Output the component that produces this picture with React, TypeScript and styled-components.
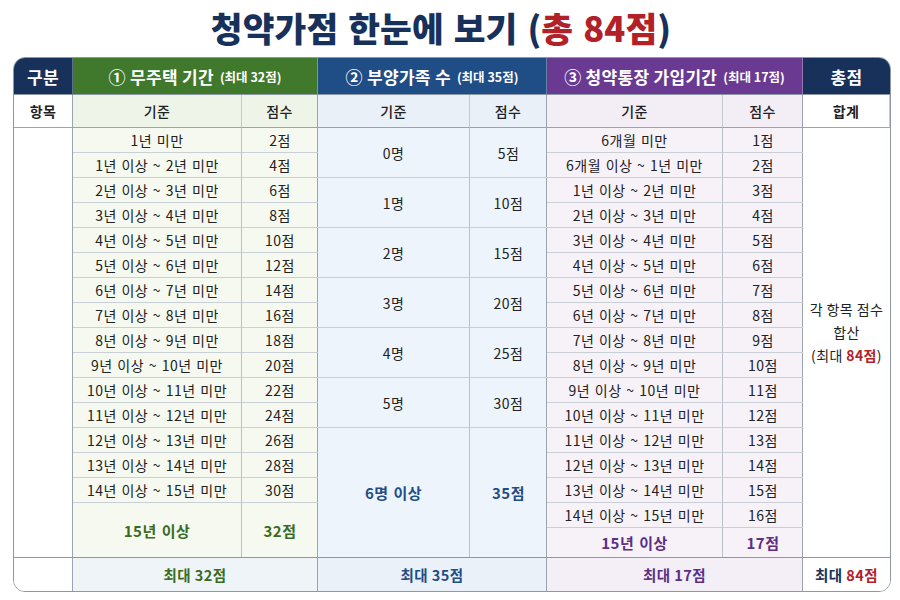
import React from 'react';
import styled, { createGlobalStyle } from 'styled-components';

const GlobalStyle = createGlobalStyle`
  html, body {
    margin: 0;
    padding: 0;
    background: #ffffff;
  }
  body {
    font-family: 'Noto Sans CJK KR', 'Noto Sans', sans-serif;
    color: #222;
  }
`;

const COLS = [59, 169, 76, 152, 77, 176, 80, 87];
const ROW = 25;

type Tone = {
  head: string;
  sub: string;
  body: string;
  foot: string;
  ink: string;
};

const GREEN: Tone = { head: '#41792c', sub: '#eef4e7', body: '#f5f9ef', foot: '#eff4f9', ink: '#3a6b22' };
const BLUE: Tone = { head: '#1f4d85', sub: '#e9f0f8', body: '#eef4fb', foot: '#ebf1f9', ink: '#1f4d85' };
const PURPLE: Tone = { head: '#6a3a92', sub: '#f3edf6', body: '#f7f1f8', foot: '#f4eef7', ink: '#5b2f86' };
const NAVY = '#17315a';
const RED = '#b32128';

const Page = styled.div`
  width: 900px;
  height: 600px;
  padding: 0 9px 0 13px;
  box-sizing: border-box;
  overflow: hidden;
`;

const Title = styled.h1`
  margin: 0;
  height: 57px;
  display: flex;
  align-items: center;
  justify-content: center;
  padding: 0 22px 3px 0;
  box-sizing: border-box;
  font-size: 34.5px;
  font-weight: 800;
  color: ${NAVY};
  letter-spacing: 0.1px;
  word-spacing: 2px;
`;

const Accent = styled.span`
  color: ${RED};
`;

const Table = styled.div`
  display: grid;
  grid-template-columns: ${COLS.map((c) => `${c}px`).join(' ')};
  grid-template-rows: 37px 33px 430px 1fr;
  width: 878px;
  height: 535px;
  box-sizing: border-box;
  border: 1px solid #8e98a5;
  border-radius: 12px;
  overflow: hidden;
  background: #fff;
`;

const HeadCell = styled.div<{ $bg: string; $span?: number; $last?: boolean }>`
  grid-column: span ${(p) => p.$span ?? 1};
  background: ${(p) => p.$bg};
  color: #fff;
  display: flex;
  align-items: center;
  justify-content: center;
  gap: 6px;
  font-size: 17px;
  font-weight: 700;
  letter-spacing: 0.3px;
  border-right: ${(p) => (p.$last ? 'none' : '1px solid rgba(255,255,255,0.3)')};
  border-bottom: 1px solid #8e98a5;
`;

const HeadNote = styled.span`
  font-size: 12.5px;
  font-weight: 700;
  letter-spacing: 0;
`;

const SubCell = styled.div<{ $bg: string; $bold?: boolean; $strong?: boolean }>`
  background: ${(p) => p.$bg};
  display: flex;
  align-items: center;
  justify-content: center;
  font-size: 14px;
  font-weight: ${(p) => (p.$bold ? 700 : 500)};
  letter-spacing: 0.4px;
  color: #222;
  border-right: 1px solid ${(p) => (p.$strong ? '#9aa4b0' : '#c3cad2')};
  border-bottom: 1px solid #9aa4b0;
  &:last-child {
    border-right: none;
  }
`;

const BlankColumn = styled.div`
  background: #fff;
  border-right: 1px solid #9aa4b0;
  border-bottom: 1px solid #8e98a5;
`;

const GroupBody = styled.div<{ $bg: string; $cols: string; $rows: string }>`
  grid-column: span 2;
  display: grid;
  grid-template-columns: ${(p) => p.$cols};
  grid-template-rows: ${(p) => p.$rows};
  background: ${(p) => p.$bg};
  border-right: 1px solid #9aa4b0;
  border-bottom: 1px solid #8e98a5;
`;

const Cell = styled.div<{ $ink?: string; $big?: boolean; $first?: boolean }>`
  display: flex;
  align-items: center;
  justify-content: center;
  font-size: ${(p) => (p.$big ? '15px' : '14px')};
  font-weight: ${(p) => (p.$big ? 700 : 400)};
  letter-spacing: 0.5px;
  word-spacing: 1px;
  color: ${(p) => p.$ink ?? '#222'};
  border-right: ${(p) => (p.$first ? '1px solid #b8c0c9' : 'none')};
  border-bottom: 1px solid #c9cfd6;
  white-space: nowrap;
  &:nth-last-child(-n + 2) {
    border-bottom: none;
  }
`;

const TotalBody = styled.div`
  display: flex;
  flex-direction: column;
  align-items: center;
  justify-content: center;
  padding-bottom: 20px;
  box-sizing: border-box;
  font-size: 14px;
  line-height: 23px;
  letter-spacing: 0.4px;
  color: #222;
  border-bottom: 1px solid #8e98a5;
`;

const FootCell = styled.div<{ $bg: string; $ink: string; $span?: number; $last?: boolean }>`
  grid-column: span ${(p) => p.$span ?? 1};
  background: ${(p) => p.$bg};
  color: ${(p) => p.$ink};
  display: flex;
  align-items: center;
  justify-content: center;
  font-size: 14.5px;
  font-weight: 700;
  letter-spacing: 0.4px;
  border-right: ${(p) => (p.$last ? 'none' : '1px solid #9aa4b0')};
`;

const Red = styled.span`
  color: ${RED};
  font-weight: 700;
`;

const noHouse = [
  ['1년 미만', '2점'],
  ['1년 이상 ~ 2년 미만', '4점'],
  ['2년 이상 ~ 3년 미만', '6점'],
  ['3년 이상 ~ 4년 미만', '8점'],
  ['4년 이상 ~ 5년 미만', '10점'],
  ['5년 이상 ~ 6년 미만', '12점'],
  ['6년 이상 ~ 7년 미만', '14점'],
  ['7년 이상 ~ 8년 미만', '16점'],
  ['8년 이상 ~ 9년 미만', '18점'],
  ['9년 이상 ~ 10년 미만', '20점'],
  ['10년 이상 ~ 11년 미만', '22점'],
  ['11년 이상 ~ 12년 미만', '24점'],
  ['12년 이상 ~ 13년 미만', '26점'],
  ['13년 이상 ~ 14년 미만', '28점'],
  ['14년 이상 ~ 15년 미만', '30점'],
];

const family = [
  ['0명', '5점'],
  ['1명', '10점'],
  ['2명', '15점'],
  ['3명', '20점'],
  ['4명', '25점'],
  ['5명', '30점'],
];

const account = [
  ['6개월 미만', '1점'],
  ['6개월 이상 ~ 1년 미만', '2점'],
  ['1년 이상 ~ 2년 미만', '3점'],
  ['2년 이상 ~ 3년 미만', '4점'],
  ['3년 이상 ~ 4년 미만', '5점'],
  ['4년 이상 ~ 5년 미만', '6점'],
  ['5년 이상 ~ 6년 미만', '7점'],
  ['6년 이상 ~ 7년 미만', '8점'],
  ['7년 이상 ~ 8년 미만', '9점'],
  ['8년 이상 ~ 9년 미만', '10점'],
  ['9년 이상 ~ 10년 미만', '11점'],
  ['10년 이상 ~ 11년 미만', '12점'],
  ['11년 이상 ~ 12년 미만', '13점'],
  ['12년 이상 ~ 13년 미만', '14점'],
  ['13년 이상 ~ 14년 미만', '15점'],
  ['14년 이상 ~ 15년 미만', '16점'],
];

type GroupProps = {
  tone: Tone;
  widths: [number, number];
  rows: string[][];
  rowSpan: number;
  last: [string, string];
};

const Group: React.FC<GroupProps> = function ({ tone, widths, rows, rowSpan, last }) {
  return (
    <GroupBody
      $bg={tone.body}
      $cols={`${widths[0]}px ${widths[1]}px`}
      $rows={`repeat(${rows.length}, ${ROW * rowSpan}px) 1fr`}
    >
      {rows.map(([label, score]) => (
        <React.Fragment key={label}>
          <Cell $first>{label}</Cell>
          <Cell>{score}</Cell>
        </React.Fragment>
      ))}
      <Cell $first $big $ink={tone.ink}>{last[0]}</Cell>
      <Cell $big $ink={tone.ink}>{last[1]}</Cell>
    </GroupBody>
  );
};

const App: React.FC = function () {
  return (
    <Page>
      <GlobalStyle />
      <Title>
        청약가점 한눈에 보기 (<Accent>총 84점</Accent>)
      </Title>

      <Table>
        <HeadCell $bg={NAVY}>구분</HeadCell>
        <HeadCell $bg={GREEN.head} $span={2}>
          ① 무주택 기간 <HeadNote>(최대 32점)</HeadNote>
        </HeadCell>
        <HeadCell $bg={BLUE.head} $span={2}>
          ② 부양가족 수 <HeadNote>(최대 35점)</HeadNote>
        </HeadCell>
        <HeadCell $bg={PURPLE.head} $span={2}>
          ③ 청약통장 가입기간 <HeadNote>(최대 17점)</HeadNote>
        </HeadCell>
        <HeadCell $bg={NAVY} $last>총점</HeadCell>

        <SubCell $bg="#fff" $bold $strong>항목</SubCell>
        <SubCell $bg={GREEN.sub}>기준</SubCell>
        <SubCell $bg={GREEN.sub} $strong>점수</SubCell>
        <SubCell $bg={BLUE.sub}>기준</SubCell>
        <SubCell $bg={BLUE.sub} $strong>점수</SubCell>
        <SubCell $bg={PURPLE.sub}>기준</SubCell>
        <SubCell $bg={PURPLE.sub} $strong>점수</SubCell>
        <SubCell $bg="#fff" $bold>합계</SubCell>

        <BlankColumn />
        <Group tone={GREEN} widths={[COLS[1], COLS[2]]} rows={noHouse} rowSpan={1} last={['15년 이상', '32점']} />
        <Group tone={BLUE} widths={[COLS[3], COLS[4]]} rows={family} rowSpan={2} last={['6명 이상', '35점']} />
        <Group tone={PURPLE} widths={[COLS[5], COLS[6]]} rows={account} rowSpan={1} last={['15년 이상', '17점']} />
        <TotalBody>
          <span>각 항목 점수</span>
          <span>합산</span>
          <span>
            (최대 <Red>84점</Red>)
          </span>
        </TotalBody>

        <FootCell $bg="#fff" $ink={NAVY} />
        <FootCell $bg={GREEN.foot} $ink={GREEN.ink} $span={2}>최대 32점</FootCell>
        <FootCell $bg={BLUE.foot} $ink={BLUE.ink} $span={2}>최대 35점</FootCell>
        <FootCell $bg={PURPLE.foot} $ink={PURPLE.ink} $span={2}>최대 17점</FootCell>
        <FootCell $bg="#fff" $ink={NAVY} $last>
          최대&nbsp;<Red>84점</Red>
        </FootCell>
      </Table>
    </Page>
  );
};

export default App;
